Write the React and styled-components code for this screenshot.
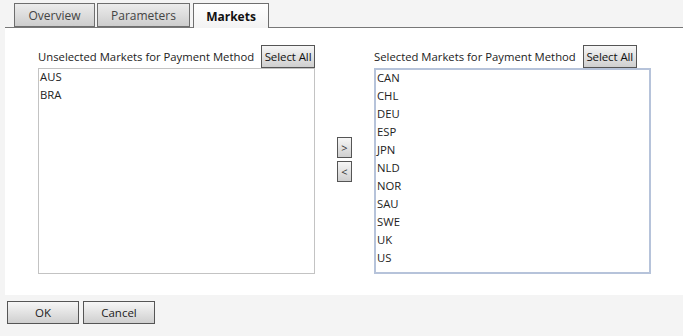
import React from "react";
import styled, { createGlobalStyle } from "styled-components";

const GlobalStyle = createGlobalStyle`
  html, body {
    margin: 0;
    padding: 0;
    background: #f4f4f4;
  }
  body {
    font-family: "Open Sans", "DejaVu Sans", sans-serif;
    font-size: 11px;
    color: #222;
  }
`;

const Page = styled.div`
  width: 683px;
  height: 336px;
  background: #f4f4f4;
  overflow: hidden;
`;

const TabBar = styled.div`
  display: flex;
  align-items: flex-end;
  gap: 2px;
  padding: 3px 0 0 14px;
  height: 24px;
`;

const Tab = styled.div`
  box-sizing: border-box;
  height: ${(p) => (p.$active ? "25px" : "24px")};
  margin-bottom: ${(p) => (p.$active ? "-1px" : "0")};
  margin-left: ${(p) => (p.$active ? "1px" : "0")};
  width: ${(p) => p.$w}px;
  display: flex;
  align-items: center;
  justify-content: center;
  border: 1px solid #6e6e6e;
  border-bottom: ${(p) => (p.$active ? "none" : "1px solid #6e6e6e")};
  background: ${(p) =>
    p.$active
      ? "linear-gradient(#ffffff, #f3f3f3)"
      : "linear-gradient(#ececec, #cdcdcd)"};
  color: ${(p) => (p.$active ? "#111" : "#444")};
  font-weight: ${(p) => (p.$active ? 700 : 400)};
  font-size: 12px;
  position: relative;
  z-index: 1;
`;

const Panel = styled.div`
  margin-left: 5px;
  height: 268px;
  background: #fff;
  border-top: 1px solid #777;
  display: flex;
  align-items: flex-start;
  padding: 17px 0 0 33px;
  box-sizing: border-box;
`;

const Column = styled.div`
  display: flex;
  flex-direction: column;
  width: 277px;
`;

const Header = styled.div`
  display: flex;
  align-items: center;
  gap: 7px;
  height: 23px;
`;

const Label = styled.span`
  font-size: 11.3px;
  color: #222;
  white-space: nowrap;
`;

const GrayButton = styled.button`
  box-sizing: border-box;
  font-family: "Open Sans", "DejaVu Sans", sans-serif;
  font-size: 11.5px;
  color: #111;
  border: 1px solid #555;
  border-radius: 0;
  background: linear-gradient(#f6f6f6, #cfcfcf);
  padding: 0;
  margin: 0;
  cursor: pointer;
  white-space: nowrap;
`;

const SelectAll = styled(GrayButton)`
  width: 54px;
  height: 23px;
  letter-spacing: -0.1px;
`;

const ListBox = styled.div`
  box-sizing: border-box;
  height: 206px;
  border: ${(p) => (p.$focus ? "2px solid #b6c3da" : "1px solid #c3c3c3")};
  padding-left: 1px;
  background: #fff;
`;

const Item = styled.div`
  height: 18px;
  line-height: 16px;
  font-size: 11.3px;
  color: #222;
`;

const Mover = styled.div`
  display: flex;
  flex-direction: column;
  gap: 3px;
  margin: 92px 22px 0 22px;
`;

const ArrowButton = styled(GrayButton)`
  width: 15px;
  height: 21px;
  font-size: 11px;
  color: #333;
`;

const Footer = styled.div`
  display: flex;
  gap: 4px;
  padding: 6px 0 0 7px;
`;

const FooterButton = styled(GrayButton)`
  width: 72px;
  height: 23px;
  color: #222;
`;

const unselected = ["AUS", "BRA"];
const selected = ["CAN", "CHL", "DEU", "ESP", "JPN", "NLD", "NOR", "SAU", "SWE", "UK", "US"];

export default function App() {
  return (
    <Page>
      <GlobalStyle />
      <TabBar>
        <Tab $w={81}>Overview</Tab>
        <Tab $w={93}>Parameters</Tab>
        <Tab $w={76} $active>Markets</Tab>
      </TabBar>
      <Panel>
        <Column>
          <Header>
            <Label>Unselected Markets for Payment Method</Label>
            <SelectAll>Select All</SelectAll>
          </Header>
          <ListBox>
            {unselected.map((m) => (
              <Item key={m}>{m}</Item>
            ))}
          </ListBox>
        </Column>
        <Mover>
          <ArrowButton>&gt;</ArrowButton>
          <ArrowButton>&lt;</ArrowButton>
        </Mover>
        <Column>
          <Header>
            <Label>Selected Markets for Payment Method</Label>
            <SelectAll>Select All</SelectAll>
          </Header>
          <ListBox $focus>
            {selected.map((m) => (
              <Item key={m}>{m}</Item>
            ))}
          </ListBox>
        </Column>
      </Panel>
      <Footer>
        <FooterButton>OK</FooterButton>
        <FooterButton>Cancel</FooterButton>
      </Footer>
    </Page>
  );
}
